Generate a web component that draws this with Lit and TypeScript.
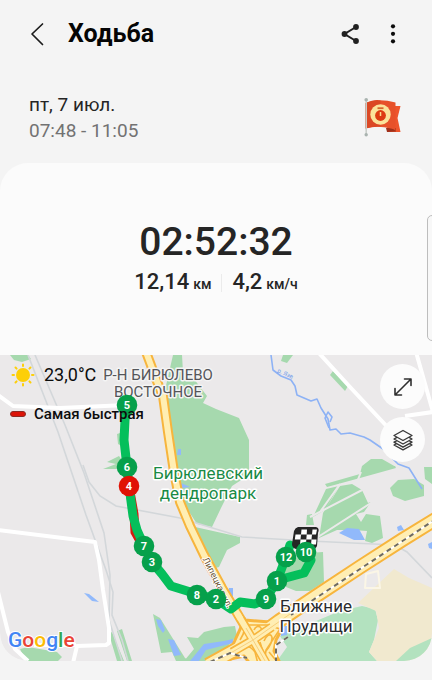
import { LitElement, html, css, svg } from "lit";
import { customElement } from "lit/decorators.js";

interface Marker {
  n: number;
  x: number;
  y: number;
  fastest?: boolean;
}

const MARKERS: Marker[] = [
  { n: 5, x: 127, y: 405 },
  { n: 6, x: 127, y: 467 },
  { n: 4, x: 129, y: 486, fastest: true },
  { n: 3, x: 152, y: 562 },
  { n: 7, x: 144, y: 546 },
  { n: 8, x: 197, y: 595 },
  { n: 2, x: 216, y: 599 },
  { n: 9, x: 266, y: 599 },
  { n: 1, x: 277, y: 581 },
  { n: 12, x: 286, y: 557 },
  { n: 10, x: 306, y: 552 },
];

const LIPETSKAYA =
  "M146 352L158 384L163 396L168 432L174 472L180 502L190 526L204 555L222 588L237 613L253 640";
const HIGHWAY = "M436 519L402 540L360 567L316 596L279 621L253 640L208 665";
const RAILWAY = "M436 519L360 569L316 598L291 615M288 637L276 645V662M210 662L230 653L247 658";

@customElement("walk-map")
export class WalkMap extends LitElement {
  static styles = css`
    :host {
      display: block;
      position: relative;
      overflow: hidden;
      font-family: Roboto, "Noto Sans", sans-serif;
    }
    .map {
      display: block;
      width: 100%;
      height: auto;
    }
    .land { fill: #ebe9ea; }
    .park { fill: #a6d9ae; }
    .park-soft { fill: #b3e2bf; }
    .sand { fill: #f1e9cf; }
    .water { fill: #91b9fb; }
    .river { fill: none; stroke: #8db2f5; stroke-width: 1.6; stroke-linejoin: round; }
    .river-text { fill: #6f9bea; font-size: 6px; }
    .rail { fill: none; stroke: #d3d7da; stroke-width: 1.6; }
    .street { fill: none; stroke: #fff; stroke-width: 4; stroke-linejoin: round; }
    .thin { stroke: #ebe9ea; stroke-width: 2; }
    .plot { stroke: #fbf6e6; stroke-width: 2; }
    .casing { fill: none; stroke: #f7b53d; stroke-linejoin: round; }
    .junction { fill: #ffeeb3; stroke: #f7b53d; stroke-width: 3; stroke-linejoin: round; }
    .road { fill: none; stroke: #ffeeb3; stroke-linejoin: round; }
    .dash-base { fill: none; stroke: #fff; stroke-width: 2; }
    .dash { fill: none; stroke: #6f6b61; stroke-width: 2; stroke-dasharray: 5 4; }
    .ramp { fill: none; stroke: #f7b53d; stroke-width: 1.6; }
    .median { fill: none; stroke: #f7cf7d; stroke-width: 1; }
    .track { fill: none; stroke: #05bf5b; stroke-width: 9; stroke-linejoin: round; stroke-linecap: round; }
    .fast { fill: none; stroke: #d31b10; stroke-width: 9; }
    .dot { fill: #06a04b; }
    .dot.fastest { fill: #e01205; }
    .num { fill: #fff; font-size: 11px; font-weight: 700; text-anchor: middle; }
    .label {
      text-anchor: middle;
      paint-order: stroke;
      stroke: #fff;
      stroke-width: 3px;
      stroke-linejoin: round;
      font-size: 17px;
    }
    .district { fill: #55565a; stroke: #f4f4f4; font-size: 15px; }
    .green { fill: #198a45; }
    .town { fill: #2a2b2e; }
    .lane { fill: #6b5330; font-size: 9px; stroke-width: 2px; }
    .logo {
      font-size: 21px;
      font-weight: 500;
      paint-order: stroke;
      stroke: #fff;
      stroke-width: 2px;
    }
    .blue { fill: #4285f4; }
    .red { fill: #ea4335; }
    .yellow { fill: #fbbc05; }
    .leaf { fill: #34a853; }
    .info {
      position: absolute;
      top: 8px;
      left: 8px;
      display: flex;
      flex-direction: column;
      gap: 16px;
      color: #0c0c0c;
    }
    .weather {
      display: flex;
      align-items: center;
      gap: 7px;
      padding-left: 1px;
      font-size: 18px;
      line-height: 24px;
    }
    .legend {
      display: flex;
      align-items: center;
      gap: 8px;
      padding-left: 2px;
      font-size: 15px;
      font-weight: 500;
      line-height: 22px;
    }
    .swatch {
      width: 16px;
      height: 6px;
      box-sizing: border-box;
      border: 1px solid #8c2a24;
      border-radius: 3px;
      background: #dc1408;
    }
    .tools {
      position: absolute;
      top: 9px;
      right: 7px;
      display: flex;
      flex-direction: column;
      gap: 8px;
    }
    .tool {
      width: 45px;
      height: 45px;
      padding: 0;
      border: 0;
      border-radius: 50%;
      background: #fcfcfc;
      display: grid;
      place-items: center;
      cursor: pointer;
    }
  `;

  private marker(m: Marker) {
    return svg`<g>
      <circle class=${m.fastest ? "dot fastest" : "dot"} cx=${m.x} cy=${m.y} r="10.3"></circle>
      <text class="num" x=${m.x} y=${m.y + 4}>${m.n}</text>
    </g>`;
  }

  render() {
    return html`
      <svg class="map" viewBox="0 355 432 306" role="img" aria-label="Маршрут">
        <rect class="land" x="0" y="355" width="432" height="306"></rect>

        <path class="park" d="M10 355H28L31 359L22 362L14 360Z"></path>
        <path class="park" d="M173 355H182L183 372L194 379L207 396L203 403L216 409L239 418L249 440V475L232 486L221 508L212 527L197 524L186 507L176 474L168 420L165 390Z"></path>
        <path class="park" d="M195 527L240 537V543L227 550L219 567L212 569L199 543Z"></path>
        <path class="park" d="M283 355H293L287 363L281 361Z"></path>
        <path class="park" d="M333 371L348 386L345 391L330 375Z"></path>
        <path class="park" d="M117 434L123 432V447L118 444ZM107 462L119 456L122 460L119 469L103 469L116 464Z"></path>
        <path class="park" d="M325 484L360 474L395 466L396 468L360 478L327 487ZM360 474L362 466L371 459L382 459L396 467Z"></path>
        <path class="park" d="M326 489L339 486L325 510L313 517ZM340 486L352 484L362 490L368 503L371 502L364 512L356 514L361 522L366 514L380 516L383 538L372 543L365 541L367 531L353 530L337 530L319 538L323 513ZM307 515L312 514L314 525L306 525Z"></path>
        <path class="park" d="M390 488L398 480L414 479L424 485V496L405 501L393 496ZM424 467H432V484L425 479Z"></path>
        <path class="park" d="M279 565L308 553L323 552L324 582L310 591L296 591L286 587Z"></path>
        <path class="park" d="M153 614L160 618L185 658L190 661H176L172 652L161 653Z"></path>
        <path class="park" d="M204 632L224 627L235 626L237 636L226 648L209 661H184L194 649L187 637L198 638Z"></path>
        <path class="park" d="M20 649L28 647L57 652L62 657L58 661H26ZM109 634L112 632L124 661H117ZM117 631L122 629L132 661H127Z"></path>
        <path class="park-soft" d="M280 636L340 611L362 606L375 609L378 620L374 640L369 652L377 661H277L287 647Z"></path>
        <path class="sand" d="M358 603L394 569L409 578L432 588V661H377L369 652L379 628L376 611Z"></path>
        <path class="park-soft" d="M432 638L410 648L396 661H432Z"></path>

        <path class="water" d="M339 533L347 528L359 529L365 540H354ZM397 527L401 525L404 530L398 531ZM428 544L432 542V549L429 548Z"></path>
        <path class="water" d="M84 593L89 594L99 602L92 601ZM156 619L161 620L165 630L163 633L158 626ZM168 639L174 640L181 655L174 656ZM224 641L233 639V643L206 650L199 661H190L204 644ZM281 626H287V635L281 636ZM229 588L233 588V598L228 592Z"></path>
        <path class="water" d="M178 449H181V455H177ZM181 483L190 487L182 488Z"></path>
        <path class="river" d="M271 355L273 370L281 376L291 380L295 386L297 395L311 401L317 399L321 408L328 419L330 430L336 429L341 434L350 433L364 437L370 440L383 449L398 464L409 468L414 476L422 489"></path>
        <path class="river" d="M329 428L325 418L328 412L332 417L330 422"></path>
        <text class="river-text" transform="translate(277 372) rotate(25)">р. Язв</text>

        <path class="rail" d="M28 355L58 432L86 515L106 570L113 592L112 615L122 640L128 661"></path>
        <path class="rail" d="M35 355L65 425L84 473L104 533L110 575L109 620L122 661"></path>
        <path class="rail" d="M83 465L89 482L100 496L116 506L180 518L242 537L310 541L395 545L407 552L432 578"></path>
        <path class="street" d="M-2 395L13 406L60 408L127 405"></path>
        <path class="street" d="M-2 530L95 542L99 560L103 590L109 628V643L106 645L77 646L73 663"></path>
        <path class="street" d="M-2 592L8 632L15 649L28 661M34 645H76"></path>
        <path class="street" d="M318 352L350 387L394 434M416 352L433 412L405 416"></path>
        <path class="street thin" d="M310 517L368 487M320 512L340 484M318 537L374 501M357 482L361 472"></path>
        <path class="street plot" d="M366 574L378 571L380 588H365Z"></path>

        <path class="casing" stroke-width="10" d=${LIPETSKAYA}></path>
        <path class="casing" stroke-width="15" d=${HIGHWAY}></path>
        <path class="junction" d="M237 614L245 620L270 622L282 629L276 640L274 651L281 665H251L244 656L226 660L236 638L242 625Z"></path>
        <path class="road" stroke-width="6" d=${LIPETSKAYA}></path>
        <path class="road" stroke-width="11" d=${HIGHWAY}></path>
        <path class="ramp" d="M240 640L248 625L268 625L280 629L266 650L264 665M243 634C245 625 255 631 248 636M254 630C258 622 265 629 260 635M264 641C269 629 278 636 266 651M238 651C242 645 249 644 255 652L258 664M260 642L267 665M269 652L279 664"></path>
        <path class="casing" stroke-width="9" d="M241 619L253 640L266 663"></path>
        <path class="casing" stroke-width="9" d="M272 627L253 640L232 652"></path>
        <path class="road" stroke-width="6" d="M237 613L253 640L269 668"></path>
        <path class="road" stroke-width="6" d="M279 622L253 640L217 661"></path>
        <path class="median" d="M246 628L253 640L268 666M290 614L253 640L222 658"></path>
        <path class="dash-base" d=${RAILWAY}></path>
        <path class="dash" d=${RAILWAY}></path>

        <text class="label district" x="158" y="380">Р-Н БИРЮЛЕВО</text>
        <text class="label district" x="158" y="397">ВОСТОЧНОЕ</text>
        <text class="label green" x="208" y="479">Бирюлевский</text>
        <text class="label green" x="208" y="499">дендропарк</text>
        <text class="label town" x="316" y="612">Ближние</text>
        <text class="label town" x="316" y="632">Прудищи</text>

        <path class="fast" d="M129 486L134 514L135 532L144 548"></path>
        <path class="track" d="M127 405L125 420L124 440L127 467L129 486L133 516L137 530L145 548L152 562L162 574L171 586L197 594L216 599L231 609L240 602L255 604L266 599L277 581L286 557L290 545M306 552L311 560L304 573L278 580"></path>
        <text class="label lane" transform="translate(215 584) rotate(63)">Липецкая ул.</text>
        <path fill="#252525" d="M298 527H316Q320 528 318 533L317 546Q315 550 310 549H296Q292 548 292 544L294 531Q295 528 298 527Z"></path>
        <path fill="#fff" d="M301.500 529.500H307L306.700 534.500H301ZM312.500 529.500H317L316 534.500H312ZM295.500 534.500H301L300.500 539.500H294.800ZM306.700 534.500H312L311.500 539.500H306.300ZM300.500 539.500H306.300L306 544.500H300ZM311.500 539.500H316.500L316 544.500H311Z"></path>
        ${MARKERS.map((m) => this.marker(m))}

        <text class="logo" x="8" y="647"><tspan class="blue">G</tspan><tspan class="red">o</tspan><tspan class="yellow">o</tspan><tspan class="blue">g</tspan><tspan class="leaf">l</tspan><tspan class="red">e</tspan></text>
      </svg>

      <div class="info">
        <div class="weather">
          <svg width="28" height="24" viewBox="0 0 28 24" aria-hidden="true">
            <circle cx="14" cy="12" r="7" fill="#fdcf08"></circle>
            <path d="M14 1.500V3M14 21V22.500M3.500 12H5M23 12H24.500M6.500 4.500L7.600 5.600M20.400 18.400L21.500 19.500M21.500 4.500L20.400 5.600M7.600 18.400L6.500 19.500" stroke="#fdcf08" stroke-width="2" stroke-linecap="round"></path>
          </svg>
          <span>23,0°C</span>
        </div>
        <div class="legend"><span class="swatch"></span><span>Самая быстрая</span></div>
      </div>

      <div class="tools">
        <button class="tool" aria-label="Развернуть карту">
          <svg width="20" height="20" viewBox="0 0 20 20" fill="none" stroke="#2f2f2f" stroke-width="1.600" stroke-linecap="round" stroke-linejoin="round">
            <path d="M2 18L18 2M11.500 2H18V8.500M2 11.500V18H8.500"></path>
          </svg>
        </button>
        <button class="tool" aria-label="Слои карты">
          <svg width="22" height="22" viewBox="0 0 22 22" fill="none" stroke="#3a3a3a" stroke-width="1.400" stroke-linejoin="round" stroke-linecap="round">
            <path d="M11 1.500L20 6.500L11 11.500L2 6.500ZM4.500 8.600L2 10L11 15L20 10L17.500 8.600M4.500 11.800L2 13.200L11 18.200L20 13.200L17.500 11.800M4.500 14.600L2 16L11 20.800L20 16L17.500 14.600"></path>
          </svg>
        </button>
      </div>
    `;
  }
}

@customElement("app-root")
export class AppRoot extends LitElement {
  static styles = css`
    :host {
      display: block;
      min-height: 100vh;
      background: #f4f4f4;
      color: #252525;
      font-family: Roboto, "Noto Sans", sans-serif;
    }
    .bar {
      display: flex;
      align-items: center;
      height: 67px;
      padding: 0 25px 0 24px;
      box-sizing: border-box;
    }
    .icon {
      width: 28px;
      height: 32px;
      padding: 0;
      border: 0;
      background: none;
      display: grid;
      place-items: center;
      cursor: pointer;
    }
    .title {
      flex: 1;
      margin: 0 0 0 16px;
      color: #050505;
      font-size: 25px;
      font-weight: 700;
      line-height: 32px;
    }
    .actions {
      display: flex;
      gap: 16px;
    }
    .when {
      display: flex;
      align-items: center;
      justify-content: space-between;
      padding: 25px 30px 19px 29px;
    }
    .date,
    .time {
      margin: 0;
      font-size: 19px;
      line-height: 26px;
    }
    .time {
      color: #727272;
    }
    .card {
      position: relative;
      overflow: hidden;
      border-radius: 28px;
      background: #fbfbfb;
    }
    .stats {
      display: flex;
      flex-direction: column;
      align-items: center;
      padding: 55px 0;
    }
    .duration {
      font-size: 39px;
      font-weight: 500;
      line-height: 48px;
    }
    .row {
      display: flex;
      align-items: center;
      gap: 10px;
      font-size: 22px;
      font-weight: 500;
      line-height: 32px;
    }
    .measure {
      display: flex;
      align-items: baseline;
      gap: 4px;
    }
    .unit {
      font-size: 14px;
    }
    .rule {
      width: 1px;
      height: 18px;
      background: #ebebeb;
    }
    .edge {
      position: absolute;
      top: 52px;
      right: -7px;
      width: 12px;
      height: 126px;
      box-sizing: border-box;
      border: 1px solid #bdbdbd;
      border-radius: 5px;
      background: #f8f8f8;
    }
  `;

  render() {
    return html`
      <header class="bar">
        <button class="icon" aria-label="Назад">
          <svg width="28" height="28" viewBox="0 0 28 28" fill="none" stroke="#1c1c1c" stroke-width="1.700" stroke-linecap="round" stroke-linejoin="round">
            <path d="M18.500 4L8 14L18.500 24.500"></path>
          </svg>
        </button>
        <h1 class="title">Ходьба</h1>
        <div class="actions">
          <button class="icon" aria-label="Поделиться">
            <svg width="28" height="28" viewBox="0 0 28 28" fill="#202020">
              <path d="M21 7L9.500 14L21 21" fill="none" stroke="#202020" stroke-width="2"></path>
              <circle cx="21" cy="7" r="2.900"></circle>
              <circle cx="9.500" cy="14" r="2.900"></circle>
              <circle cx="21" cy="21" r="2.900"></circle>
            </svg>
          </button>
          <button class="icon" aria-label="Ещё">
            <svg width="28" height="28" viewBox="0 0 28 28" fill="#0c0c0c">
              <circle cx="14" cy="6.300" r="2.100"></circle>
              <circle cx="14" cy="13.800" r="2.100"></circle>
              <circle cx="14" cy="21.300" r="2.100"></circle>
            </svg>
          </button>
        </div>
      </header>

      <section class="when">
        <div>
          <p class="date">пт, 7 июл.</p>
          <p class="time">07:48 - 11:05</p>
        </div>
        <svg width="40" height="40" viewBox="0 0 40 40" role="img" aria-label="Награда">
          <path d="M30 8H38.500L35.500 20L38.500 34H25V30Z" fill="#ee552c"></path>
          <path d="M24 30H34V33.500L25 34Z" fill="#9f301b"></path>
          <path d="M3.500 5Q16 0 33.500 4.500V33.500Q33 31 29 30.500Q15 27 3.500 30.500Z" fill="#e7512a"></path>
          <path d="M3.500 5Q13 1 18.500 2.500V28.500Q10 28.500 3.500 30.500Z" fill="#db4824"></path>
          <circle cx="18.500" cy="16.500" r="10.200" fill="#fbe29a"></circle>
          <circle cx="18.500" cy="17.500" r="5.400" fill="#de3b12"></circle>
          <path d="M15.500 10.200H21.500" stroke="#d8642b" stroke-width="1.800"></path>
          <path d="M18.500 14V18" stroke="#fbd98c" stroke-width="1.500"></path>
          <path d="M4.200 2V36" stroke="#c9cdc9" stroke-width="1.600"></path>
          <circle cx="4.200" cy="1.800" r="1.800" fill="#a9b3af"></circle>
          <circle cx="4.200" cy="36.700" r="1.700" fill="#a9b3af"></circle>
        </svg>
      </section>

      <main class="card">
        <section class="stats">
          <div class="duration">02:52:32</div>
          <div class="row">
            <span class="measure"><span>12,14</span><span class="unit">км</span></span>
            <span class="rule"></span>
            <span class="measure"><span>4,2</span><span class="unit">км/ч</span></span>
          </div>
        </section>
        <walk-map></walk-map>
        <div class="edge"></div>
      </main>
    `;
  }
}
